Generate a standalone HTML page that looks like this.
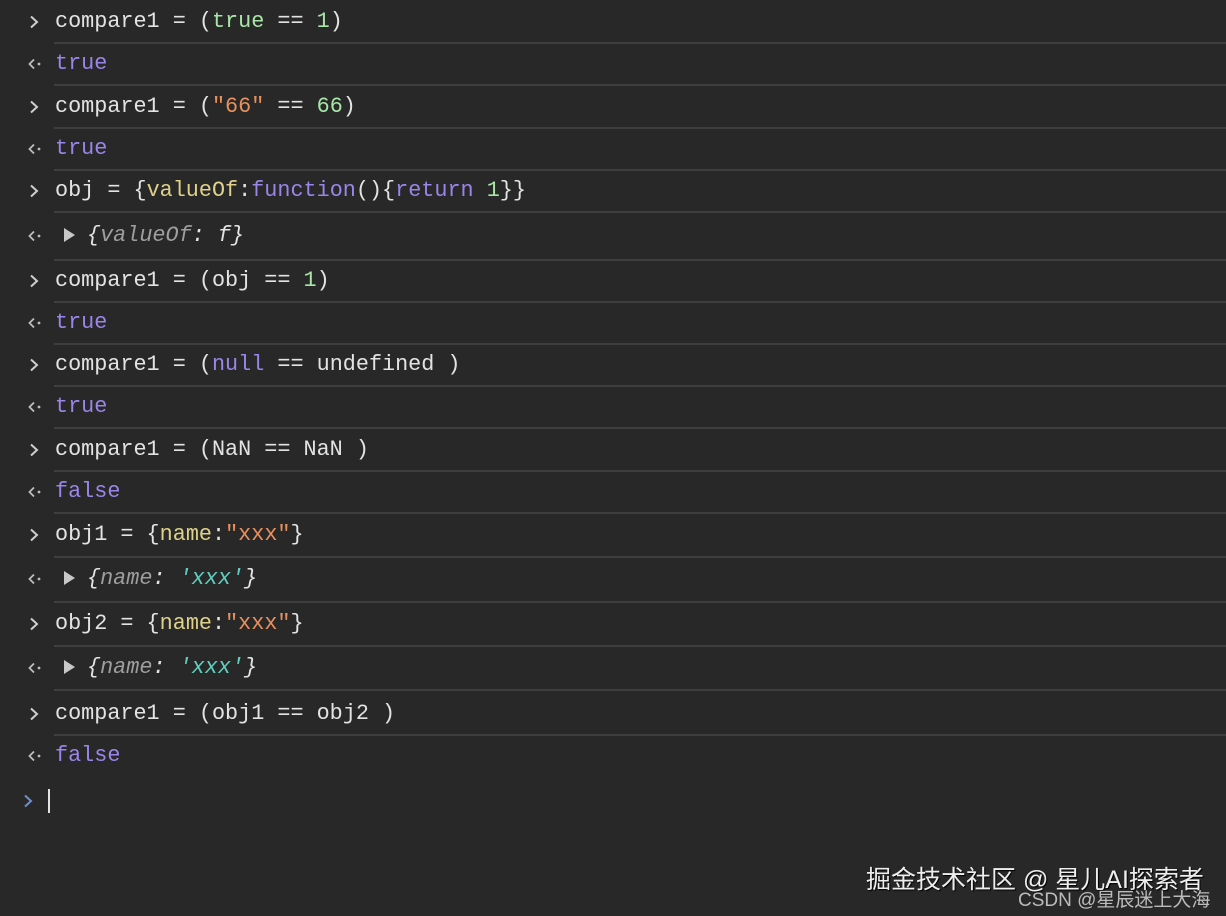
<!DOCTYPE html><html><head><meta charset="utf-8"><style>
body{margin:0;width:1226px;height:916px;background:#282828;overflow:hidden;position:relative;font-family:"Liberation Mono",monospace;font-size:21.8px;color:#e3e3e3}
.r{position:absolute;left:55px;height:30px;line-height:30px;white-space:pre}
.s{position:absolute;left:54px;right:0;height:2px;background:#3e3e3e}
.p{position:absolute;left:-26px;top:8px;width:10px;height:14px}
.o{position:absolute;left:-28px;top:9px;width:16px;height:12px}
.g{color:#a7e6a6}.v{color:#9a85e8}.or{color:#e8905d}.y{color:#dfd18a}.it{font-style:italic;color:#9e9e9e}.c{color:#5fd0c0}.w{color:#e3e3e3;font-style:italic}
.tri{display:inline-block;width:0;height:0;border-left:11px solid #c8c8c8;border-top:7px solid transparent;border-bottom:7px solid transparent;margin-right:12px;margin-left:9px;vertical-align:-1px}
</style></head><body>
<svg width="0" height="0" style="position:absolute"><defs>
<symbol id="gt" viewBox="0 0 10 14"><path d="M2 1.5 L8 7 L2 12.5" fill="none" stroke="#cfcfcf" stroke-width="2"/></symbol>
<symbol id="lt" viewBox="0 0 16 12"><path d="M7 1.5 L2.5 6 L7 10.5" fill="none" stroke="#bdbdbd" stroke-width="1.8"/><circle cx="12" cy="6" r="1.4" fill="#bdbdbd"/></symbol>
</defs></svg>
<div class="r" style="top:7px"><svg class="p"><use href="#gt"/></svg>compare1 = (<span class="g">true</span> == <span class="g">1</span>)</div><div class="s" style="top:42px"></div>
<div class="r" style="top:49px"><svg class="o"><use href="#lt"/></svg><span class="v">true</span></div><div class="s" style="top:84px"></div>
<div class="r" style="top:92px"><svg class="p"><use href="#gt"/></svg>compare1 = (<span class="or">"66"</span> == <span class="g">66</span>)</div><div class="s" style="top:127px"></div>
<div class="r" style="top:134px"><svg class="o"><use href="#lt"/></svg><span class="v">true</span></div><div class="s" style="top:169px"></div>
<div class="r" style="top:176px"><svg class="p"><use href="#gt"/></svg>obj = {<span class="y">valueOf</span>:<span class="v">function</span>(){<span class="v">return</span> <span class="g">1</span>}}</div><div class="s" style="top:211px"></div>
<div class="r" style="top:221px"><svg class="o"><use href="#lt"/></svg><span class="tri"></span><span class="w">{</span><span class="it">valueOf</span><span class="w">: f}</span></div><div class="s" style="top:259px"></div>
<div class="r" style="top:266px"><svg class="p"><use href="#gt"/></svg>compare1 = (obj == <span class="g">1</span>)</div><div class="s" style="top:301px"></div>
<div class="r" style="top:308px"><svg class="o"><use href="#lt"/></svg><span class="v">true</span></div><div class="s" style="top:343px"></div>
<div class="r" style="top:350px"><svg class="p"><use href="#gt"/></svg>compare1 = (<span class="v">null</span> == undefined )</div><div class="s" style="top:385px"></div>
<div class="r" style="top:392px"><svg class="o"><use href="#lt"/></svg><span class="v">true</span></div><div class="s" style="top:427px"></div>
<div class="r" style="top:435px"><svg class="p"><use href="#gt"/></svg>compare1 = (NaN == NaN )</div><div class="s" style="top:470px"></div>
<div class="r" style="top:477px"><svg class="o"><use href="#lt"/></svg><span class="v">false</span></div><div class="s" style="top:512px"></div>
<div class="r" style="top:520px"><svg class="p"><use href="#gt"/></svg>obj1 = {<span class="y">name</span>:<span class="or">"xxx"</span>}</div><div class="s" style="top:556px"></div>
<div class="r" style="top:564px"><svg class="o"><use href="#lt"/></svg><span class="tri"></span><span class="w">{</span><span class="it">name</span><span class="w">: </span><span class="c" style="font-style:italic">'xxx'</span><span class="w">}</span></div><div class="s" style="top:601px"></div>
<div class="r" style="top:609px"><svg class="p"><use href="#gt"/></svg>obj2 = {<span class="y">name</span>:<span class="or">"xxx"</span>}</div><div class="s" style="top:645px"></div>
<div class="r" style="top:653px"><svg class="o"><use href="#lt"/></svg><span class="tri"></span><span class="w">{</span><span class="it">name</span><span class="w">: </span><span class="c" style="font-style:italic">'xxx'</span><span class="w">}</span></div><div class="s" style="top:689px"></div>
<div class="r" style="top:699px"><svg class="p"><use href="#gt"/></svg>compare1 = (obj1 == obj2 )</div><div class="s" style="top:734px"></div>
<div class="r" style="top:741px"><svg class="o"><use href="#lt"/></svg><span class="v">false</span></div>
<svg style="position:absolute;left:23px;top:794px" width="10" height="14" viewBox="0 0 10 14"><path d="M2 1.5 L8 7 L2 12.5" fill="none" stroke="#6f8fd0" stroke-width="2"/></svg>
<div style="position:absolute;left:48px;top:789px;width:2px;height:24px;background:#e3e3e3"></div>
<div style="position:absolute;left:866px;top:860px;font-family:'Liberation Sans','Noto Sans CJK SC',sans-serif;font-size:25px;color:#eee;text-shadow:1px 1px 1px #000;white-space:nowrap">掘金技术社区 @ 星儿AI探索者</div>
<div style="position:absolute;left:1018px;top:885px;font-family:'Liberation Sans','Noto Sans CJK SC',sans-serif;font-size:19px;color:#bbb;white-space:nowrap">CSDN @星辰迷上大海</div>
</body></html>
